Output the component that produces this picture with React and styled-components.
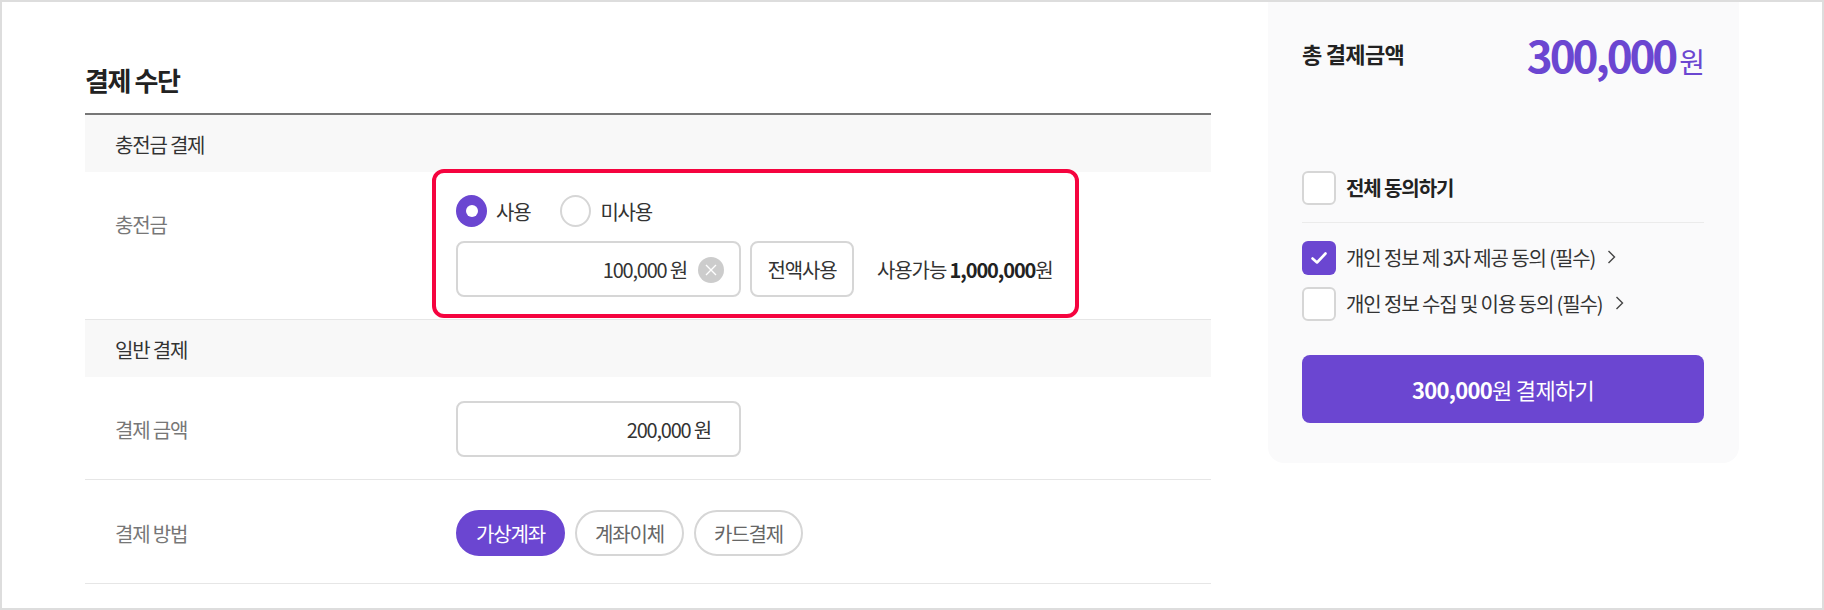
import React from "react";
import styled, { createGlobalStyle } from "styled-components";

const purple = "#6b46d1";

const GlobalStyle = createGlobalStyle`
  * { box-sizing: border-box; }
  body {
    margin: 0;
    background: #fff;
    font-family: "Noto Sans CJK KR", "Noto Sans", sans-serif;
    color: #333;
  }
`;

const Page = styled.div`
  width: 1824px;
  height: 610px;
  border: 2px solid #ddd;
  display: flex;
  align-items: flex-start;
  overflow: hidden;
  padding-left: 83px;
`;

const Main = styled.div`
  width: 1126px;
  flex: none;
`;

const Title = styled.h2`
  margin: 0;
  padding: 61px 0 16px;
  font-size: 26px;
  line-height: 34px;
  font-weight: 700;
  letter-spacing: -1.4px;
  color: #222;
  border-bottom: 2px solid #777;
`;

const SectionHead = styled.div`
  height: 57px;
  display: flex;
  align-items: center;
  padding: 2px 0 0 30px;
  background: #f8f8f8;
  font-size: 20px;
  letter-spacing: -1.2px;
  color: #333;
`;

const Row = styled.div`
  position: relative;
  display: grid;
  grid-template-columns: 371px 1fr;
  align-items: ${(p) => (p.$top ? "start" : "center")};
  padding: ${(p) => p.$pad};
  border-bottom: 1px solid #e6e6e6;
`;

const Label = styled.div`
  padding-left: 30px;
  padding-top: ${(p) => p.$offset || 0}px;
  font-size: 20px;
  line-height: 26px;
  letter-spacing: -1.2px;
  color: #777;
`;

const Highlight = styled.div`
  position: absolute;
  top: -3px;
  left: 347px;
  width: 647px;
  height: 149px;
  border: 4px solid #f5043f;
  border-radius: 12px;
  pointer-events: none;
`;

const Stack = styled.div`
  display: flex;
  flex-direction: column;
  gap: 14px;
`;

const RadioRow = styled.div`
  display: flex;
  align-items: center;
  height: 32px;
`;

const RadioItem = styled.label`
  display: flex;
  align-items: center;
  gap: 9px;
  margin-right: 30px;
  font-size: 20px;
  letter-spacing: -1.2px;
  color: #333;
`;

const RadioDot = styled.span`
  width: 31px;
  height: 32px;
  flex: none;
  border-radius: 50%;
  display: flex;
  align-items: center;
  justify-content: center;
  background: ${(p) => (p.$on ? purple : "#fff")};
  border: ${(p) => (p.$on ? "none" : "2px solid #d6d6d6")};

  &::after {
    content: "";
    display: ${(p) => (p.$on ? "block" : "none")};
    width: 12px;
    height: 12px;
    border-radius: 50%;
    background: #fff;
  }
`;

const FieldRow = styled.div`
  display: flex;
  align-items: center;
`;

const Field = styled.div`
  width: 285px;
  height: 56px;
  flex: none;
  display: flex;
  align-items: center;
  justify-content: flex-end;
  gap: 11px;
  padding-right: ${(p) => p.$right}px;
  background: #fff;
  border: 2px solid #d6d6d6;
  border-radius: 8px;
  font-size: 20px;
  letter-spacing: -1.2px;
  color: #333;
`;

const ClearIcon = styled.svg`
  width: 26px;
  height: 26px;
  flex: none;
  margin-top: 2px;
`;

const GhostButton = styled.button`
  width: 104px;
  height: 56px;
  margin-left: 9px;
  flex: none;
  padding: 0;
  background: #fff;
  border: 2px solid #d6d6d6;
  border-radius: 8px;
  font: inherit;
  font-size: 20px;
  letter-spacing: -1.2px;
  color: #333;
`;

const Available = styled.div`
  margin-left: 23px;
  font-size: 20px;
  letter-spacing: -1.1px;
  color: #333;

  b {
    font-weight: 700;
    color: #222;
  }
`;

const Pills = styled.div`
  display: flex;
  gap: 10px;
`;

const Pill = styled.button`
  width: 109px;
  height: 46px;
  padding: 0;
  border-radius: 23px;
  font: inherit;
  font-size: 20px;
  letter-spacing: -1.2px;
  background: ${(p) => (p.$on ? purple : "#fff")};
  border: 2px solid ${(p) => (p.$on ? purple : "#d6d6d6")};
  color: ${(p) => (p.$on ? "#fff" : "#666")};
`;

const Summary = styled.aside`
  width: 471px;
  height: 461px;
  margin-left: 57px;
  flex: none;
  padding: 28px 35px 0 34px;
  background: #fafafb;
  border-radius: 0 0 16px 16px;
`;

const TotalRow = styled.div`
  display: flex;
  align-items: flex-start;
  justify-content: space-between;
  height: 141px;
`;

const TotalLabel = styled.div`
  padding-top: 8px;
  font-size: 22px;
  line-height: 30px;
  font-weight: 700;
  letter-spacing: -0.7px;
  color: #222;
`;

const TotalAmount = styled.div`
  display: flex;
  align-items: baseline;
  gap: 4px;
  margin-top: -3px;
  color: ${purple};
  font-size: 28px;
  line-height: 54px;
  letter-spacing: -1px;

  b {
    font-size: 44px;
    font-weight: 700;
    letter-spacing: -3.1px;
  }
`;

const AgreeRow = styled.div`
  display: flex;
  align-items: center;
  gap: 10px;
  height: 34px;
  margin-bottom: ${(p) => p.$gap || 0}px;
  font-size: 20px;
  letter-spacing: -1.1px;
  color: #333;
`;

const AgreeText = styled.span`
  margin-top: -2px;
  font-weight: ${(p) => (p.$strong ? 700 : 400)};
  color: ${(p) => (p.$strong ? "#222" : "#333")};
`;

const Check = styled.span`
  width: 34px;
  height: 34px;
  flex: none;
  display: flex;
  align-items: center;
  justify-content: center;
  border-radius: 6px;
  background: ${(p) => (p.$on ? purple : "#fff")};
  border: ${(p) => (p.$on ? "none" : "2px solid #d6d6d6")};
`;

const Divider = styled.div`
  height: 1px;
  margin: 17px 0 18px;
  background: #ebebeb;
`;

const Chevron = styled.svg`
  width: 9px;
  height: 14px;
  flex: none;
  margin: -2px 0 0 2px;
`;

const PayButton = styled.button`
  width: 100%;
  height: 68px;
  margin-top: 34px;
  padding: 0;
  border: none;
  border-radius: 8px;
  background: ${purple};
  color: #fff;
  font: inherit;
  font-size: 22px;
  letter-spacing: -0.7px;

  b {
    font-weight: 700;
  }
`;

const ChevronIcon = () => (
  <Chevron viewBox="0 0 9 14" fill="none">
    <path d="M1.5 1l6 6-6 6" stroke="#444" strokeWidth="1.4" />
  </Chevron>
);

export default function App() {
  return (
    <Page>
      <GlobalStyle />
      <Main>
        <Title>결제 수단</Title>
        <SectionHead>충전금 결제</SectionHead>
        <Row $top $pad="23px 0 22px">
          <Label $offset={17}>충전금</Label>
          <Stack>
            <RadioRow>
              <RadioItem>
                <RadioDot $on />
                사용
              </RadioItem>
              <RadioItem>
                <RadioDot />
                미사용
              </RadioItem>
            </RadioRow>
            <FieldRow>
              <Field $right={15}>
                100,000 원
                <ClearIcon viewBox="0 0 26 26">
                  <circle cx="13" cy="13" r="13" fill="#ccc" />
                  <path d="M8 8l10 10M18 8L8 18" stroke="#fff" strokeWidth="1.4" />
                </ClearIcon>
              </Field>
              <GhostButton>전액사용</GhostButton>
              <Available>
                사용가능 <b>1,000,000</b>원
              </Available>
            </FieldRow>
          </Stack>
          <Highlight />
        </Row>
        <SectionHead>일반 결제</SectionHead>
        <Row $pad="24px 0 22px">
          <Label $offset={2}>결제 금액</Label>
          <Field $right={28}>200,000 원</Field>
        </Row>
        <Row $pad="30px 0 27px">
          <Label $offset={2}>결제 방법</Label>
          <Pills>
            <Pill $on>가상계좌</Pill>
            <Pill>계좌이체</Pill>
            <Pill>카드결제</Pill>
          </Pills>
        </Row>
      </Main>
      <Summary>
        <TotalRow>
          <TotalLabel>총 결제금액</TotalLabel>
          <TotalAmount>
            <b>300,000</b>원
          </TotalAmount>
        </TotalRow>
        <AgreeRow>
          <Check />
          <AgreeText $strong>전체 동의하기</AgreeText>
        </AgreeRow>
        <Divider />
        <AgreeRow $gap={12}>
          <Check $on>
            <svg width="18" height="14" viewBox="0 0 18 14" fill="none">
              <path
                d="M2.5 7.5l4.5 4 8.5-9"
                stroke="#fff"
                strokeWidth="2.6"
                strokeLinecap="round"
                strokeLinejoin="round"
              />
            </svg>
          </Check>
          <AgreeText>개인 정보 제 3자 제공 동의 (필수)</AgreeText>
          <ChevronIcon />
        </AgreeRow>
        <AgreeRow>
          <Check />
          <AgreeText>개인 정보 수집 및 이용 동의 (필수)</AgreeText>
          <ChevronIcon />
        </AgreeRow>
        <PayButton>
          <b>300,000</b>원 결제하기
        </PayButton>
      </Summary>
    </Page>
  );
}
